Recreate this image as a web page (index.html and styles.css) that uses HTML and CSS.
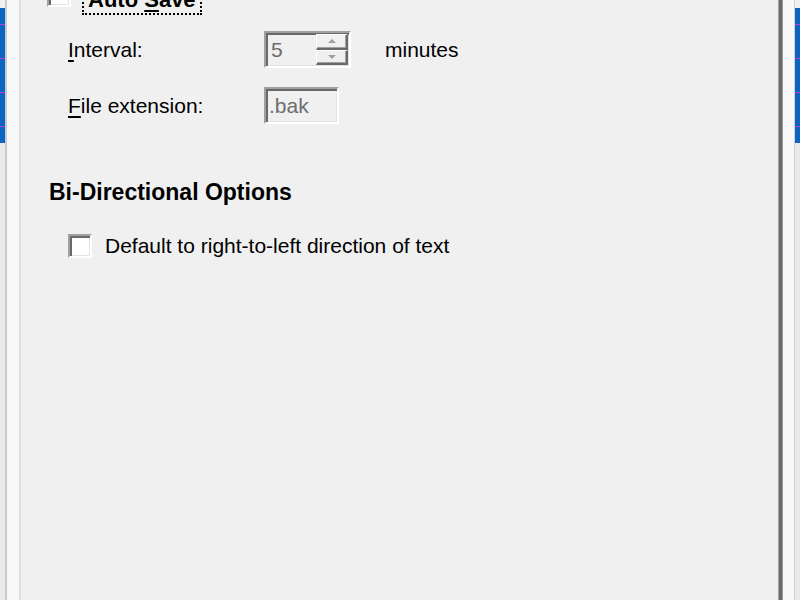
FILE: index.html
```html
<!DOCTYPE html>
<html>
<head>
<meta charset="utf-8">
<link rel="stylesheet" href="styles.css">
</head>
<body>
<div class="screen">
  <div class="edge">
    <div class="edge-top"></div>
    <div class="bluebar"><i class="g g1"></i><i class="g g2"></i><i class="g g3"></i><i class="g g4"></i></div>
  </div>
  <div class="sep-l"></div>
  <div class="gutter"></div>
  <div class="border-l"></div>
  <div class="page">
    <div class="autosave">
      <span class="cb"></span>
      <span class="focus"><b>Auto <u>S</u>ave</b></span>
    </div>
    <div class="fields">
      <label class="lbl"><u>I</u>nterval:</label>
      <div class="ctrl-row">
        <div class="box spin">
          <span class="val">5</span>
          <div class="spin-btns">
            <div class="sb up"><span class="tri tri-up"></span></div>
            <div class="sb down"><span class="tri tri-down"></span></div>
          </div>
        </div>
        <span class="unit">minutes</span>
      </div>
      <label class="lbl"><u>F</u>ile extension:</label>
      <div class="ctrl-row">
        <div class="box ext"><span class="val">.bak</span></div>
      </div>
    </div>
    <h2 class="heading">Bi-Directional Options</h2>
    <div class="check-row">
      <span class="cb"></span>
      <span class="cb-label">Default to right-to-left direction of text</span>
    </div>
  </div>
  <div class="border-r"></div>
  <div class="gutter gutter-r"></div>
  <div class="sep-r"></div>
  <div class="edge">
    <div class="edge-top"></div>
    <div class="bluebar"><i class="g g1"></i><i class="g g2"></i><i class="g g3"></i><i class="g g4"></i></div>
  </div>
</div>
</body>
</html>
```
FILE: styles.css
```css
* { box-sizing: border-box; }
html, body { margin: 0; padding: 0; }
body {
  width: 800px;
  height: 600px;
  overflow: hidden;
  background: #f0f0f0;
  font-family: "Liberation Sans", Arial, sans-serif;
  font-size: 21px;
  color: #000;
}
.screen {
  display: flex;
  width: 800px;
  height: 600px;
}
.edge {
  width: 5px;
  background: #e9e9e9;
  display: flex;
  flex-direction: column;
}
.edge-top { height: 8px; background: #f0f0f0; }
.bluebar {
  height: 135px;
  background: #0a64c4;
  display: flex;
  flex-direction: column;
  justify-content: space-around;
}
.g { display: block; height: 1px; background: #b040d8; }
.sep-l { width: 2px; background: #c9c9c9; }
.gutter { width: 12px; background: #f8f8f8; }
.gutter-r { width: 11px; }
.border-l { width: 2px; background: #dedede; }
.sep-r { width: 1px; background: #d2d2d2; }
.border-r {
  width: 5px;
  border-left: 1px solid #a8a8a8;
  background: #6a6a6a;
  border-right: 1px solid #9a9a9a;
}
.page {
  width: 757px;
  display: flex;
  flex-direction: column;
}

/* checkbox */
.cb {
  display: inline-block;
  width: 24px;
  height: 24px;
  background: #fff;
  border-style: solid;
  border-width: 2px;
  border-color: #a0a0a0 #fff #fff #a0a0a0;
  box-shadow: inset 2px 2px 0 #696969, inset -1px -1px 0 #e3e3e3;
  flex: none;
}

.autosave {
  margin-top: -17px;
  margin-left: 26px;
  height: 24px;
  display: flex;
  align-items: flex-start;
}
.focus {
  margin-left: 11px;
  margin-top: 4px;
  border: 2px dotted #000;
  padding: 0 4px 2px 4px;
  line-height: 22px;
  font-size: 22px;
}
.focus b { font-weight: bold; }

.fields {
  margin-top: 24px;
  margin-left: 47px;
  display: grid;
  grid-template-columns: 196px auto;
  row-gap: 19px;
  align-items: center;
}
.lbl { line-height: 24px; }
.ctrl-row { display: flex; align-items: center; }
.box {
  height: 37px;
  background: #f0f0f0;
  border-style: solid;
  border-width: 2px;
  border-color: #a0a0a0 #fff #fff #a0a0a0;
  box-shadow: inset 2px 2px 0 #696969, inset -1px -1px 0 #e3e3e3;
  display: flex;
  align-items: center;
  color: #6d6d6d;
}
.val { padding-left: 5px; line-height: 24px; }
.spin { width: 87px; justify-content: space-between; }
.ext { width: 75px; }
.ext .val { padding-left: 3px; }
.spin-btns {
  width: 32px;
  height: 31px;
  margin-right: 1px;
  display: flex;
  flex-direction: column;
}
.sb {
  flex: 1;
  background: #f0f0f0;
  border-style: solid;
  border-width: 1px 2px 2px 1px;
  border-color: #fff #696969 #696969 #fff;
  box-shadow: inset -1px -1px 0 #a0a0a0;
  display: flex;
  align-items: center;
  justify-content: center;
}
.tri {
  width: 0;
  height: 0;
  border-left: 4px solid transparent;
  border-right: 4px solid transparent;
}
.tri-up { border-bottom: 4px solid #a0a0a0; }
.tri-down { border-top: 4px solid #a0a0a0; }
.unit { margin-left: 34px; line-height: 24px; }

.heading {
  margin: 55px 0 0 28px;
  font-size: 23px;
  font-weight: bold;
  line-height: 26px;
}
.check-row {
  margin-top: 29px;
  margin-left: 47px;
  display: flex;
  align-items: center;
  height: 24px;
}
.cb-label { margin-left: 13px; }
u { text-decoration-thickness: 2px; text-underline-offset: 3px; }
```
